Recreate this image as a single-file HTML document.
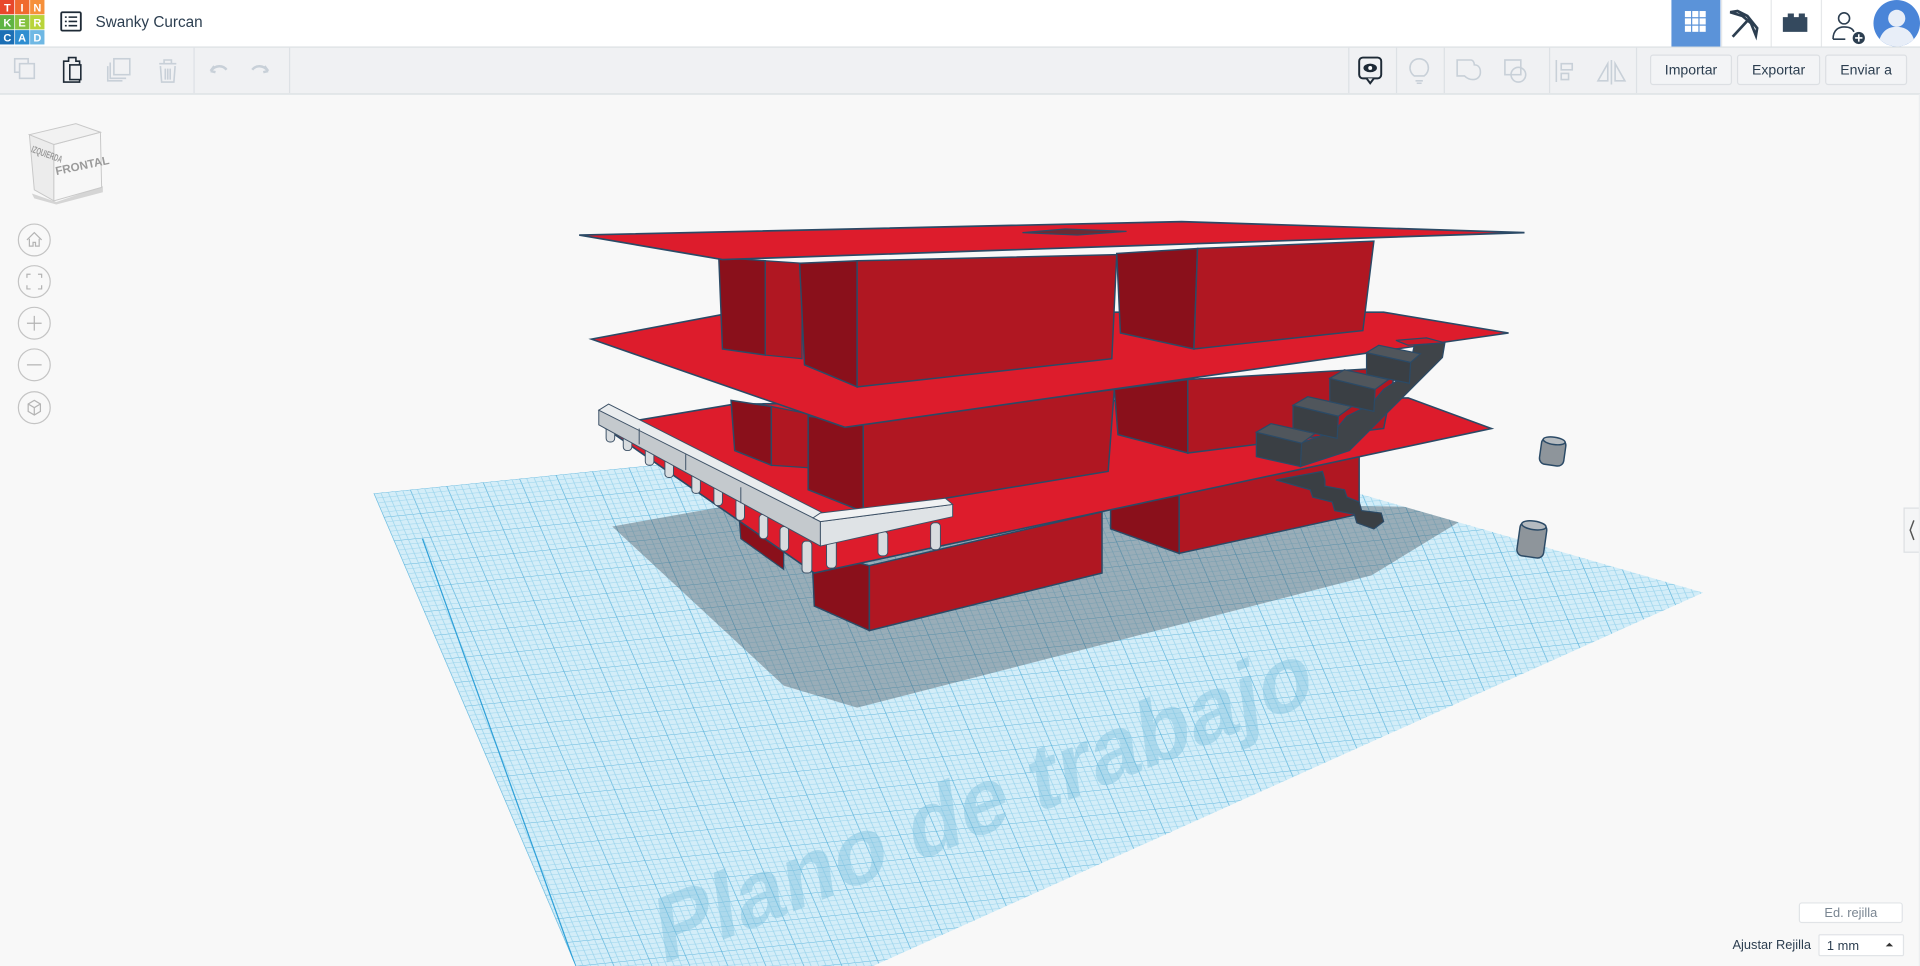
<!DOCTYPE html>
<html><head><meta charset="utf-8"><style>
html,body{margin:0;padding:0;width:1920px;height:966px;overflow:hidden;background:#f8f8f8}
svg{display:block}
text{font-family:"Liberation Sans",sans-serif}
</style></head><body>
<svg width="1920" height="966" viewBox="0 0 1568 789" preserveAspectRatio="none" xmlns="http://www.w3.org/2000/svg">
<defs>
<pattern id="g" width="10" height="10" patternUnits="userSpaceOnUse" patternTransform="matrix(2.975 -0.3 0.825 1.93 305 403)">
<rect width="10" height="10" fill="#d3edf8"/>
<path d="M0 0H10M0 0V10" stroke="#5cb4dc" stroke-width="0.4" fill="none"/>
<path d="M0 2H10M0 4H10M0 6H10M0 8H10M2 0V10M4 0V10M6 0V10M8 0V10" stroke="#98d3ec" stroke-width="0.2" fill="none"/>
</pattern>
<clipPath id="gc"><polygon points="305,403 900,343 1391,484 713,789 470,789"/></clipPath>
</defs>
<rect x="0" y="77" width="1568" height="712" fill="#f8f8f8"/>
<g clip-path="url(#gc)">
<rect x="300" y="330" width="1100" height="460" fill="url(#g)"/>
<line x1="345" y1="440" x2="470" y2="789" stroke="#2ea0d8" stroke-width="1"/>
<line x1="855" y1="789" x2="1260" y2="600" stroke="#2ea0d8" stroke-width="1"/>
<text x="0" y="0" transform="translate(540,788) rotate(-22) skewX(-14)" font-size="74" font-weight="bold" fill="#7fc0dd" fill-opacity="0.45">Plano de trabajo</text>
<polygon points="500,430 640,405 1210,415 1120,470 700,578 640,560" fill="#4a5560" fill-opacity="0.42"/>
</g>
<polygon points="907,405 963,398 963,452 907,432" fill="#8a101b" stroke="#2b4a66" stroke-width="1.2"/>
<polygon points="963,398 1110,372 1110,420 963,452" fill="#b01722" stroke="#2b4a66" stroke-width="1.2"/>
<polygon points="603,415 640,440 640,465 605,440" fill="#8a101b" stroke="#2b4a66" stroke-width="1"/>
<polygon points="663,450 710,462 710,515 665,495" fill="#8a101b" stroke="#2b4a66" stroke-width="1.2"/>
<polygon points="710,462 900,418 900,468 710,515" fill="#b01722" stroke="#2b4a66" stroke-width="1.2"/>
<polygon points="1042,392 1080,385 1082,392 1082,397 1098,400 1100,406 1110,410 1112,417 1128,419 1130,426 1122,432 1108,427 1106,420 1090,417 1088,410 1072,406 1070,400" fill="#3a3f44" stroke="#2b4a66" stroke-width="1"/>
<polygon points="492,348 600,330 1150,325 1218,350 665,468" fill="#dd1c2c" stroke="#2b4a66" stroke-width="1.3"/>
<polygon points="597,327 630,332 630,380 600,368" fill="#8a101b" stroke="#2b4a66" stroke-width="1.2"/>
<polygon points="630,332 660,338 660,382 630,380" fill="#b01722" stroke="#2b4a66" stroke-width="1"/>
<polygon points="910,318 970,310 970,370 913,355" fill="#8a101b" stroke="#2b4a66" stroke-width="1.2"/>
<polygon points="970,310 1140,300 1130,350 970,370" fill="#b01722" stroke="#2b4a66" stroke-width="1.2"/>
<polygon points="660,340 705,345 705,418 660,400" fill="#8a101b" stroke="#2b4a66" stroke-width="1.2"/>
<polygon points="705,345 910,318 905,385 705,418" fill="#b01722" stroke="#2b4a66" stroke-width="1.2"/>
<polygon points="483,277 600,255 1130,255 1232,272 690,349" fill="#dd1c2c" stroke="#2b4a66" stroke-width="1.3"/>
<polygon points="587,210 625,213 625,290 590,285" fill="#8a101b" stroke="#2b4a66" stroke-width="1.2"/>
<polygon points="625,213 655,215 655,293 625,290" fill="#b01722" stroke="#2b4a66" stroke-width="1"/>
<polygon points="912,207 978,203 975,285 915,272" fill="#8a101b" stroke="#2b4a66" stroke-width="1.2"/>
<polygon points="978,203 1122,197 1113,270 975,285" fill="#b01722" stroke="#2b4a66" stroke-width="1.2"/>
<polygon points="653,215 700,213 700,316 657,298" fill="#8a101b" stroke="#2b4a66" stroke-width="1.2"/>
<polygon points="700,213 912,208 908,293 700,316" fill="#b01722" stroke="#2b4a66" stroke-width="1.2"/>
<polygon points="473,192 965,181 1245,190 590,212" fill="#dd1c2c" stroke="#2b4a66" stroke-width="1.4"/>
<polygon points="835,190 870,187 920,189 880,192" fill="#6b2b34" stroke="#2b4a66" stroke-width="1"/>
<polygon points="1140,278 1165,276 1180,280 1150,282" fill="#c81a28" stroke="#2b4a66" stroke-width="1"/>
<g stroke="#2b4a66" stroke-width="1">
<polygon points="1155,282 1180,280 1178,292 1170,300 1160,310 1150,320 1140,330 1128,342 1115,355 1102,368 1062,381 1062,362 1090,352 1100,340 1120,330 1130,318 1150,305" fill="#3f4449"/>
<polygon points="1026,353 1063,362 1062,381 1026,373" fill="#3a3f44"/>
<polygon points="1026,353 1038,346 1074,354 1063,362" fill="#50565c"/>
<polygon points="1056,331 1093,340 1092,358 1056,350" fill="#3a3f44"/>
<polygon points="1056,331 1068,324 1104,332 1093,340" fill="#50565c"/>
<polygon points="1086,309 1123,318 1122,336 1086,328" fill="#3a3f44"/>
<polygon points="1086,309 1098,302 1134,310 1123,318" fill="#50565c"/>
<polygon points="1116,288 1152,296 1151,313 1116,306" fill="#3a3f44"/>
<polygon points="1116,288 1126,282 1160,289 1152,296" fill="#50565c"/>
</g>
<g stroke="#3d5166" stroke-width="0.8">
<g fill="#d8dcdf">
<rect x="495" y="345" width="7" height="16" rx="3"/><rect x="509" y="352" width="7" height="16" rx="3"/>
<rect x="527" y="362" width="7" height="18" rx="3"/><rect x="543" y="372" width="7" height="18" rx="3"/>
<rect x="565" y="385" width="7" height="18" rx="3"/><rect x="583" y="395" width="7" height="18" rx="3"/>
<rect x="601" y="407" width="7" height="18" rx="3"/><rect x="620" y="420" width="7" height="20" rx="3"/>
<rect x="637" y="430" width="7" height="20" rx="3"/><rect x="655" y="442" width="8" height="26" rx="3"/>
<rect x="675" y="440" width="8" height="24" rx="3"/><rect x="717" y="434" width="8" height="20" rx="3"/>
<rect x="760" y="427" width="8" height="22" rx="3"/>
</g>
<polygon points="489,335 497,333 670,425 670,446 489,347" fill="#c4c9cd"/>
<polygon points="489,335 497,330 676,421 670,426" fill="#e9ecee"/>
<polygon points="670,426 778,412 778,422 670,446" fill="#dfe3e6"/>
<polygon points="664,423 670,419 772,407 778,412 670,426" fill="#f0f2f3"/>
<line x1="522" y1="350" x2="522" y2="363"/><line x1="560" y1="371" x2="560" y2="384"/><line x1="605" y1="398" x2="605" y2="411"/>
</g>
<g stroke="#2b4a66" stroke-width="1.2">
<rect x="1258" y="358" width="20" height="22" rx="5" fill="#8e959b" transform="rotate(8 1268 369)"/>
<ellipse cx="1268" cy="360" rx="9" ry="3" fill="#b5bbc0" transform="rotate(8 1268 369)"/>
<rect x="1240" y="427" width="22" height="28" rx="5" fill="#8e959b" transform="rotate(8 1251 441)"/>
<ellipse cx="1251" cy="429" rx="10" ry="3.5" fill="#b5bbc0" transform="rotate(8 1251 441)"/>
</g>
<rect x="0" y="0" width="1568" height="38" fill="#fff"/>
<rect x="0" y="38" width="1568" height="1" fill="#d9dde1"/>
<g font-size="9" font-weight="bold" fill="#fff" text-anchor="middle">
<rect x="0" y="0" width="11.7" height="11.7" fill="#e8472b"/><rect x="12.3" y="0" width="11.7" height="11.7" fill="#f06a2f"/><rect x="24.6" y="0" width="11.7" height="11.7" fill="#f6903a"/>
<rect x="0" y="12.3" width="11.7" height="11.7" fill="#5fb443"/><rect x="12.3" y="12.3" width="11.7" height="11.7" fill="#86c241"/><rect x="24.6" y="12.3" width="11.7" height="11.7" fill="#b9d43a"/>
<rect x="0" y="24.6" width="11.7" height="11.7" fill="#1c6fb5"/><rect x="12.3" y="24.6" width="11.7" height="11.7" fill="#2f8ed1"/><rect x="24.6" y="24.6" width="11.7" height="11.7" fill="#6fb8e4"/>
<text x="6" y="9.5">T</text><text x="18" y="9.5">I</text><text x="30.5" y="9.5">N</text>
<text x="6" y="21.8">K</text><text x="18" y="21.8">E</text><text x="30.5" y="21.8">R</text>
<text x="6" y="34">C</text><text x="18" y="34">A</text><text x="30.5" y="34">D</text>
</g>
<rect x="50" y="10" width="16" height="15" fill="none" stroke="#1e2a36" stroke-width="1.5" rx="1"/>
<path d="M53 14h1.5M56 14h7M53 17.5h1.5M56 17.5h7M53 21h1.5M56 21h7" stroke="#1e2a36" stroke-width="1.3"/>
<text x="78" y="22" font-size="12.5" fill="#2c3e50">Swanky Curcan</text>
<rect x="1365" y="0" width="40" height="38" fill="#5b93d9"/>
<g fill="#fff"><rect x="1376" y="9" width="5" height="5"/><rect x="1382" y="9" width="5" height="5"/><rect x="1388" y="9" width="5" height="5"/>
<rect x="1376" y="15" width="5" height="5"/><rect x="1382" y="15" width="5" height="5"/><rect x="1388" y="15" width="5" height="5"/>
<rect x="1376" y="21" width="5" height="5"/><rect x="1382" y="21" width="5" height="5"/><rect x="1388" y="21" width="5" height="5"/></g>
<path d="M1413 10l6-1 8 4 8 10-1 6-4-10-7-6zM1427 17l-12 13" stroke="#2c3e50" stroke-width="2.2" fill="none"/>
<rect x="1405.5" y="0" width="1" height="38" fill="#e6e8ea"/><rect x="1446" y="0" width="1" height="38" fill="#e6e8ea"/><rect x="1487" y="0" width="1" height="38" fill="#e6e8ea"/>
<path d="M1456 14h4v-3h5v3h4v-3h5v3h2v12h-20z" fill="#34495e"/>
<circle cx="1506" cy="15" r="4.5" fill="none" stroke="#2c3e50" stroke-width="1.3"/>
<path d="M1497 32c0-8 5-10 9-10s7 1 8 4M1497 32h10" fill="none" stroke="#2c3e50" stroke-width="1.3"/>
<circle cx="1518" cy="31" r="5" fill="#2c3e50"/><path d="M1518 28v6M1515 31h6" stroke="#fff" stroke-width="1.3"/>
<circle cx="1549" cy="19" r="19" fill="#4a85d8"/>
<circle cx="1549" cy="15" r="7" fill="#e8eef8"/><path d="M1535 32c3-8 8-10 14-10s11 2 14 10c-4 4-9 6-14 6s-10-2-14-6z" fill="#e8eef8"/>
<rect x="0" y="39" width="1568" height="38" fill="#f0f1f3"/>
<rect x="0" y="76" width="1568" height="1.5" fill="#e2e5e8"/>
<g fill="none" stroke="#c8d0d8" stroke-width="1.3">
<rect x="12" y="48" width="11" height="11"/><rect x="16" y="52" width="12" height="12" fill="#f0f1f3"/>
<rect x="93" y="48" width="13" height="13"/><path d="M90 51v13h13M88 54v12h12"/>
<path d="M130 52h14M134 52v-3h6v3M131 54l1 13h10l1-13M135 56v9M137 56v9M139 56v9"/>
<path d="M185 57c-3-4-9-4-13 1l3 -4M172 58l4 1" stroke-width="2"/>
<path d="M206 57c3-4 9-4 13 1l-3-4M219 58l-4 1" stroke-width="2"/>
<path d="M1190 49h11c3 0 3 4 3 4 3 0 5 2 5 6s-3 6-6 6c-4 0-6-2-7-3h-6z"/>
<rect x="1229" y="49" width="13" height="12"/><circle cx="1240" cy="61" r="6"/>
<path d="M1271 49v18M1275 52h9v5h-9zM1275 60h6v5h-6z"/>
<path d="M1316 49v20M1313 66l-8 0 8-14zM1319 66h8l-8-14z"/>
<path d="M1157 68h4M1156 66h6M1155 62c-6-4-4-14 4-14s10 10 4 14z"/>
</g>
<path d="M56 47h6v3h3v17h-13v-17h4z" fill="none" stroke="#1e2a36" stroke-width="1.3"/>
<rect x="57" y="53" width="9" height="12" fill="#f0f1f3" stroke="#1e2a36" stroke-width="1.3"/>
<rect x="1110" y="47" width="18" height="17" rx="3" fill="none" stroke="#1e2a36" stroke-width="1.6"/>
<path d="M1116 64l3 4 3-4" fill="#f0f1f3" stroke="#1e2a36" stroke-width="1.6"/>
<ellipse cx="1119" cy="55.5" rx="5.5" ry="3.5" fill="#1e2a36"/><circle cx="1119" cy="55.5" r="1.6" fill="#fff"/>
<g fill="#dde1e5"><rect x="158" y="39" width="1" height="37"/><rect x="236" y="39" width="1" height="37"/><rect x="1101" y="39" width="1" height="37"/><rect x="1140" y="39" width="1" height="37"/><rect x="1179" y="39" width="1" height="37"/><rect x="1265" y="39" width="1" height="37"/><rect x="1336" y="39" width="1" height="37"/></g>
<g font-size="11.5" fill="#2c3e50" text-anchor="middle">
<rect x="1348" y="45" width="66" height="24" rx="2" fill="#f3f4f6" stroke="#dcdfe3"/><text x="1381" y="61">Importar</text>
<rect x="1419" y="45" width="67" height="24" rx="2" fill="#f3f4f6" stroke="#dcdfe3"/><text x="1452.5" y="61">Exportar</text>
<rect x="1491" y="45" width="66" height="24" rx="2" fill="#f3f4f6" stroke="#dcdfe3"/><text x="1524" y="61">Enviar a</text>
</g>
<g>
<polygon points="28,162 46,167 84,157 84,152 46,165 26,158" fill="#d5d5d5"/>
<polygon points="24,110 44,118 44,164 28,155" fill="#ececec" stroke="#c8c8c8" stroke-width="0.8"/>
<polygon points="44,118 82,108 83,153 44,164" fill="#f7f7f7" stroke="#c8c8c8" stroke-width="0.8"/>
<polygon points="24,110 62,101 82,108 44,118" fill="#f2f2f2" stroke="#c8c8c8" stroke-width="0.8"/>
<text x="0" y="0" transform="translate(46,143) rotate(-12)" font-size="9.5" font-weight="bold" fill="#9a9a9a">FRONTAL</text>
<text x="0" y="0" transform="translate(25,124) rotate(20) scale(0.6,1)" font-size="8" font-weight="bold" fill="#9a9a9a">IZQUIERDA</text>
</g>
<g fill="#f8f8f8" stroke="#c4c4c4" stroke-width="1">
<circle cx="28" cy="196" r="13"/><circle cx="28" cy="230" r="13"/><circle cx="28" cy="264" r="13"/><circle cx="28" cy="298" r="13"/><circle cx="28" cy="333" r="13"/>
</g>
<g fill="none" stroke="#b4b4b4" stroke-width="1">
<path d="M22 196l6-6 6 6M24 195v6h3v-3h2v3h3v-6"/>
<path d="M22 227v-3h3M31 224h3v3M34 233v3h-3M25 236h-3v-3"/>
<path d="M28 258v12M22 264h12"/><path d="M22 298h12"/>
<path d="M23 330l5-3 5 3v6l-5 3-5-3zM23 330l5 3 5-3M28 333v6"/>
</g>
<rect x="1555" y="415" width="14" height="36" fill="#f4f5f6" stroke="#dde0e3"/>
<path d="M1563 425l-3 8 3 8" fill="none" stroke="#555" stroke-width="1.2"/>
<rect x="1567" y="77" width="1" height="712" fill="#eceef0"/>
<rect x="1469.5" y="737.5" width="84" height="16" rx="2" fill="#fff" stroke="#e1e4e7"/>
<text x="1511.5" y="749" font-size="10.5" fill="#7a8692" text-anchor="middle">Ed. rejilla</text>
<text x="1479" y="775" font-size="10.5" fill="#2c3e50" text-anchor="end">Ajustar Rejilla</text>
<rect x="1485.5" y="763.5" width="69" height="17" rx="1" fill="#fff" stroke="#e1e4e7"/>
<text x="1492" y="776" font-size="10.5" fill="#2c3e50">1 mm</text>
<path d="M1540 773l3-3 3 3z" fill="#333"/>
</svg>
</body></html>
